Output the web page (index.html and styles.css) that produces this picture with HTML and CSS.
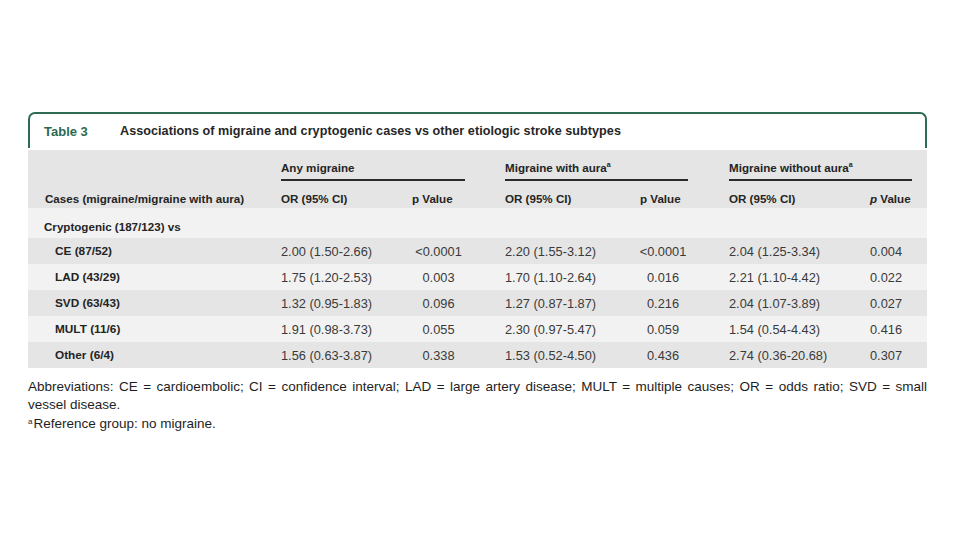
FILE: index.html
```html
<!DOCTYPE html>
<html>
<head>
<meta charset="utf-8">
<link rel="stylesheet" href="styles.css">
</head>
<body>
<div class="page">
  <div class="caption">
    <span class="tnum">Table 3</span>
    <span class="ttl">Associations of migraine and cryptogenic cases vs other etiologic stroke subtypes</span>
  </div>
  <div class="table">
    <div class="row head1">
      <div class="c0"></div>
      <div class="grp g1">Any migraine</div>
      <div class="gap"></div>
      <div class="grp g2">Migraine with aura<sup>a</sup></div>
      <div class="gap"></div>
      <div class="grp g3">Migraine without aura<sup>a</sup></div>
      <div class="end"></div>
    </div>
    <div class="row head2">
      <div class="c0">Cases (migraine/migraine with aura)</div>
      <div class="or">OR (95% CI)</div>
      <div class="p p1">p Value</div>
      <div class="gap"></div>
      <div class="or">OR (95% CI)</div>
      <div class="p p2">p Value</div>
      <div class="gap"></div>
      <div class="or">OR (95% CI)</div>
      <div class="p p3"><i>p</i> Value</div>
      <div class="end"></div>
    </div>
    <div class="row group light">
      <div class="c0">Cryptogenic (187/123) vs</div>
    </div>
    <div class="row data dark">
      <div class="c0 sub">CE (87/52)</div>
      <div class="or">2.00 (1.50-2.66)</div><div class="p p1">&lt;0.0001</div><div class="gap"></div>
      <div class="or">2.20 (1.55-3.12)</div><div class="p p2">&lt;0.0001</div><div class="gap"></div>
      <div class="or">2.04 (1.25-3.34)</div><div class="p p3">0.004</div><div class="end"></div>
    </div>
    <div class="row data light">
      <div class="c0 sub">LAD (43/29)</div>
      <div class="or">1.75 (1.20-2.53)</div><div class="p p1">0.003</div><div class="gap"></div>
      <div class="or">1.70 (1.10-2.64)</div><div class="p p2">0.016</div><div class="gap"></div>
      <div class="or">2.21 (1.10-4.42)</div><div class="p p3">0.022</div><div class="end"></div>
    </div>
    <div class="row data dark">
      <div class="c0 sub">SVD (63/43)</div>
      <div class="or">1.32 (0.95-1.83)</div><div class="p p1">0.096</div><div class="gap"></div>
      <div class="or">1.27 (0.87-1.87)</div><div class="p p2">0.216</div><div class="gap"></div>
      <div class="or">2.04 (1.07-3.89)</div><div class="p p3">0.027</div><div class="end"></div>
    </div>
    <div class="row data light">
      <div class="c0 sub">MULT (11/6)</div>
      <div class="or">1.91 (0.98-3.73)</div><div class="p p1">0.055</div><div class="gap"></div>
      <div class="or">2.30 (0.97-5.47)</div><div class="p p2">0.059</div><div class="gap"></div>
      <div class="or">1.54 (0.54-4.43)</div><div class="p p3">0.416</div><div class="end"></div>
    </div>
    <div class="row data dark">
      <div class="c0 sub">Other (6/4)</div>
      <div class="or">1.56 (0.63-3.87)</div><div class="p p1">0.338</div><div class="gap"></div>
      <div class="or">1.53 (0.52-4.50)</div><div class="p p2">0.436</div><div class="gap"></div>
      <div class="or">2.74 (0.36-20.68)</div><div class="p p3">0.307</div><div class="end"></div>
    </div>
  </div>
  <div class="notes">
    <p class="abbr">Abbreviations: CE = cardioembolic; CI = confidence interval; LAD = large artery disease; MULT = multiple causes; OR = odds ratio; SVD = small vessel disease.</p>
    <p class="ref"><sup>a</sup>Reference group: no migraine.</p>
  </div>
</div>
</body>
</html>
```
FILE: styles.css
```css
html, body {
  margin: 0;
  padding: 0;
  background: #ffffff;
}
body {
  font-family: "Liberation Sans", Arial, sans-serif;
  color: #2a2a2a;
}
.page {
  width: 899px;
  margin-left: 28px;
  padding-top: 112px;
}
.caption {
  height: 34px;
  border: 2px solid #2f6a53;
  border-bottom: none;
  border-radius: 7px 7px 0 0;
  display: flex;
  align-items: center;
  font-weight: bold;
  font-size: 12.6px;
  box-sizing: content-box;
}
.tnum {
  color: #2b6a4f;
  margin-left: 14px;
  width: 76px;
  font-size: 13px;
}
.ttl {
  color: #262626;
  letter-spacing: 0.05px;
}
.table {
  margin-top: 2px;
  width: 899px;
}
.row {
  display: grid;
  grid-template-columns: 253px 131px 53px 40px 133px 50px 41px 141px 42px 15px;
  align-items: center;
  white-space: nowrap;
  box-sizing: border-box;
}
.head1, .head2 {
  background: #e5e5e5;
  font-weight: bold;
  font-size: 11.6px;
  color: #242424;
}
.head1 {
  height: 31px;
  align-items: end;
}
.grp {
  border-bottom: 2px solid #2a2a2a;
  padding-bottom: 5px;
}
.g1 { grid-column: 2 / 4; }
.g2 { grid-column: 5 / 7; }
.g3 { grid-column: 8 / 10; }
.grp sup {
  font-size: 7px;
  vertical-align: 5px;
}
.head2 {
  height: 27px;
  padding-top: 8px;
}
.c0 {
  padding-left: 16px;
}
.head2 .c0 {
  padding-left: 17px;
}
.p1 { text-align: center; }
.p2 { text-align: center; }
.p3 { text-align: left; }
.head2 .p1 { text-align: left; padding-left: 0; }
.head2 .p2 { text-align: left; padding-left: 2px; }
.group {
  height: 30px;
  font-weight: bold;
  font-size: 11.6px;
  padding-top: 6px;
  color: #242424;
}
.group .c0 {
  grid-column: 1 / 4;
}
.data {
  height: 26px;
  font-size: 12.8px;
  color: #3a3a3a;
}
.data .c0 {
  font-weight: bold;
  font-size: 11.8px;
  color: #242424;
}
.c0.sub {
  padding-left: 27px;
}
.dark { background: #e5e5e5; }
.light { background: #f2f2f2; }
.notes {
  margin-top: 10px;
  font-size: 13.5px;
  color: #1e1e1e;
  line-height: 17.5px;
}
.notes p {
  margin: 0;
}
.abbr {
  text-align: justify;
}
.ref sup {
  font-size: 8px;
  vertical-align: 4px;
  margin-right: 1px;
}
```
